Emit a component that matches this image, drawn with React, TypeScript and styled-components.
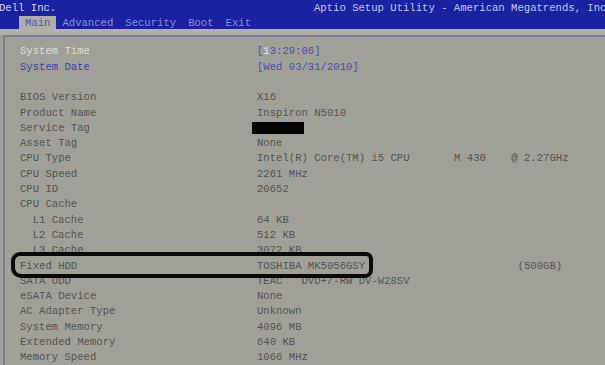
import styled, { createGlobalStyle } from 'styled-components';

const GlobalStyle = createGlobalStyle`
  html, body {
    margin: 0;
    padding: 0;
    background: #a0a098;
    overflow: hidden;
  }
  body {
    font-family: "Liberation Mono", "DejaVu Sans Mono", monospace;
    font-size: 10.6px;
  }
`;

const Screen = styled.div`
  width: 605px;
  height: 365px;
  display: flex;
  flex-direction: column;
  background: #a0a098;
  overflow: hidden;
`;

const Header = styled.div`
  height: 29px;
  background: #1b22a2;
  display: flex;
  flex-direction: column;
`;

const TitleRow = styled.div`
  height: 16px;
  display: flex;
  align-items: center;
  color: #d4d6e6;
  white-space: pre;
`;

const Vendor = styled.span`
  margin-left: -1px;
`;

const Utility = styled.span`
  margin-left: auto;
  width: 291px;
  overflow: hidden;
  color: #c2c6e4;
`;

const TabRow = styled.div`
  height: 13px;
  display: flex;
  padding-left: 19px;
`;

const Tab = styled.div<{ $active?: boolean }>`
  padding: 0 6px;
  display: flex;
  align-items: center;
  background: ${(p) => (p.$active ? '#aeaea6' : 'transparent')};
  color: ${(p) => (p.$active ? '#4c58b4' : '#8890d6')};
`;

const Band = styled.div`
  height: 6px;
  background: #b2b2aa;
`;

const Frame = styled.div`
  position: relative;
  flex: 1;
  margin-left: 3px;
  border-top: 2px solid #7a7e9a;
  border-left: 2px solid #7a7e9a;
  padding: 7px 0 0 15px;
`;

const Rows = styled.div`
  display: grid;
  grid-template-columns: 237px 1fr;
  grid-auto-rows: 15.3px;
  align-items: center;
  color: #545452;
  white-space: pre;
`;

const Label = styled.div<{ $tone?: 'light' | 'blue'; $indent?: boolean }>`
  padding-left: ${(p) => (p.$indent ? '12.7px' : '0')};
  color: ${(p) =>
    p.$tone === 'light' ? '#dcdcd6' : p.$tone === 'blue' ? '#3c40a8' : 'inherit'};
`;

const Value = styled.div<{ $blue?: boolean }>`
  color: ${(p) => (p.$blue ? '#4a50b2' : 'inherit')};
`;

const Cursor = styled.span`
  color: #e4e4ee;
`;

const Redacted = styled.span`
  display: inline-block;
  width: 52px;
  height: 12px;
  margin-left: -5px;
  background: #050505;
  vertical-align: middle;
`;

const Spacer = styled.div`
  grid-column: 1 / -1;
`;

const Marker = styled.div`
  position: absolute;
  left: 6px;
  top: 215px;
  width: 354px;
  height: 18px;
  border: 4.5px solid #0a0a0a;
  border-radius: 9px 7px 8px 10px;
  pointer-events: none;
`;

type Row = { label: string; value: string; indent?: boolean };

const hardware: Row[] = [
  { label: 'BIOS Version', value: 'X16' },
  { label: 'Product Name', value: 'Inspiron N5010' },
];

const system: Row[] = [
  { label: 'Asset Tag', value: 'None' },
  { label: 'CPU Type', value: 'Intel(R) Core(TM) i5 CPU       M 430    @ 2.27GHz' },
  { label: 'CPU Speed', value: '2261 MHz' },
  { label: 'CPU ID', value: '20652' },
  { label: 'CPU Cache', value: '' },
  { label: 'L1 Cache', value: '64 KB', indent: true },
  { label: 'L2 Cache', value: '512 KB', indent: true },
  { label: 'L3 Cache', value: '3072 KB', indent: true },
  { label: 'Fixed HDD', value: 'TOSHIBA MK5056GSY                        (500GB)' },
  { label: 'SATA ODD', value: 'TEAC   DVD+/-RW DV-W28SV' },
  { label: 'eSATA Device', value: 'None' },
  { label: 'AC Adapter Type', value: 'Unknown' },
  { label: 'System Memory', value: '4096 MB' },
  { label: 'Extended Memory', value: '640 KB' },
  { label: 'Memory Speed', value: '1066 MHz' },
];

const tabs = ['Main', 'Advanced', 'Security', 'Boot', 'Exit'];

export default function App() {
  return (
    <>
      <GlobalStyle />
      <Screen>
        <Header>
          <TitleRow>
            <Vendor>Dell Inc.</Vendor>
            <Utility>Aptio Setup Utility - American Megatrends, Inc.</Utility>
          </TitleRow>
          <TabRow>
            {tabs.map((t) => (
              <Tab key={t} $active={t === 'Main'}>
                {t}
              </Tab>
            ))}
          </TabRow>
        </Header>
        <Band />
        <Frame>
          <Rows>
            <Label $tone="light">System Time</Label>
            <Value $blue>
              [<Cursor>1</Cursor>3:29:06]
            </Value>
            <Label $tone="blue">System Date</Label>
            <Value $blue>[Wed 03/31/2010]</Value>
            <Spacer />
            {hardware.map((r) => (
              <Row key={r.label} row={r} />
            ))}
            <Label>Service Tag</Label>
            <Value>
              <Redacted />
            </Value>
            {system.map((r) => (
              <Row key={r.label} row={r} />
            ))}
          </Rows>
          <Marker />
        </Frame>
      </Screen>
    </>
  );
}

function Row({ row }: { row: Row }) {
  return (
    <>
      <Label $indent={row.indent}>{row.label}</Label>
      <Value>{row.value}</Value>
    </>
  );
}
